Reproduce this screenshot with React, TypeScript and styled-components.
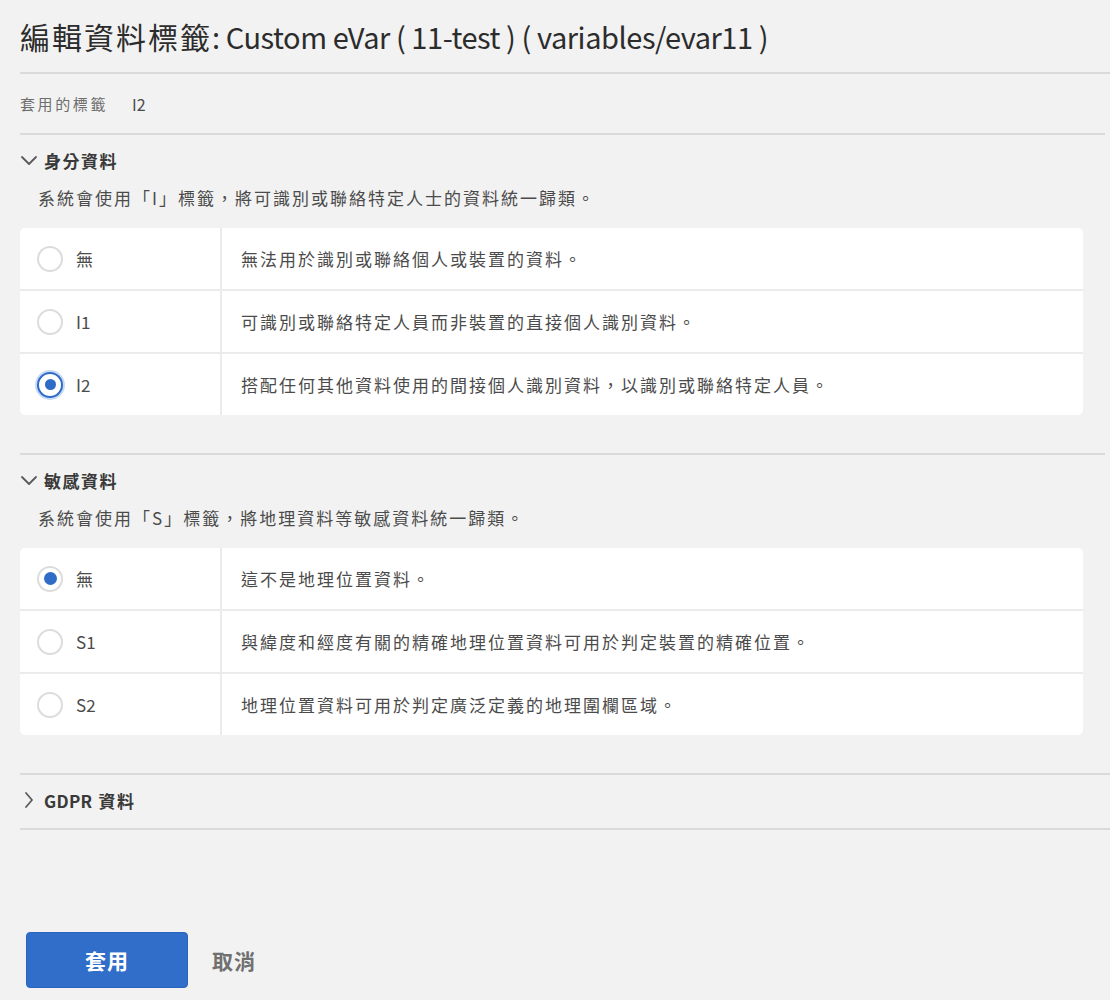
import React from "react";
import styled, { createGlobalStyle } from "styled-components";

const Global = createGlobalStyle`
  html, body { margin: 0; padding: 0; background: #f2f2f2; }
  body { font-family: "Noto Sans CJK TC", "Noto Sans", sans-serif; color: #4b4b4b; }
`;

const Page = styled.div`
  width: 1110px;
  min-height: 1000px;
  padding-left: 20px;
  box-sizing: border-box;
`;

const Title = styled.h1`
  margin: 0;
  height: 72px;
  display: flex;
  align-items: center;
  font-size: 30px;
  font-weight: 400;
  color: #2c2c2c;
  letter-spacing: 2px;
  white-space: pre;
`;

const TitleLatin = styled.span`
  font-size: 29px;
  letter-spacing: -0.45px;
`;

const AppliedRow = styled.div`
  border-top: 2px solid #dadada;
  height: 59px;
  display: flex;
  align-items: center;
  gap: 24px;
  font-size: 15px;
  letter-spacing: 2.6px;
  color: #6e6e6e;
`;

const AppliedValue = styled.span`
  color: #4b4b4b;
  font-size: 16px;
  letter-spacing: 0;
`;

const Section = styled.section<{ $open: boolean }>`
  border-top: 2px solid #dadada;
  padding: 12px 0 ${(p) => (p.$open ? "38px" : "15px")};
  margin-right: ${(p) => (p.$open ? "5px" : "0")};
`;

const LastLine = styled.div`
  border-top: 2px solid #dadada;
`;

const Heading = styled.div`
  height: 26px;
  display: flex;
  align-items: center;
  gap: 6px;
  font-size: 17px;
  font-weight: 700;
  letter-spacing: 1.5px;
  color: #3a3a3a;
`;

const HeadingLatin = styled.span`
  letter-spacing: 0.3px;
`;

const ChevronBox = styled.span`
  width: 18px;
  height: 18px;
  display: inline-flex;
  align-items: center;
  justify-content: center;
  color: #5a5a5a;
`;

const Desc = styled.div`
  margin: 13px 0 0 18px;
  line-height: 24px;
  font-size: 17px;
  letter-spacing: 2px;
  color: #4b4b4b;
`;

const Card = styled.div`
  margin-top: 18px;
  width: 1063px;
  background: #fff;
  border-radius: 5px;
  overflow: hidden;
`;

const Row = styled.div`
  display: grid;
  grid-template-columns: 202px 1fr;
  height: 61px;
  & + & { border-top: 2px solid #ebebeb; }
`;

const OptCell = styled.label`
  display: flex;
  align-items: center;
  gap: 13px;
  padding-left: 17px;
  border-right: 2px solid #ebebeb;
  font-size: 17px;
  color: #4b4b4b;
`;

const DescCell = styled.div`
  display: flex;
  align-items: center;
  padding-left: 19px;
  font-size: 17px;
  letter-spacing: 2px;
  color: #4b4b4b;
`;

const Radio = styled.span<{ $checked: boolean; $focus: boolean }>`
  width: 26px;
  height: 26px;
  box-sizing: border-box;
  border-radius: 50%;
  border: 2px solid ${(p) => (p.$focus ? "#2f6cc8" : "#dcdcdc")};
  box-shadow: ${(p) => (p.$focus ? "0 0 0 2px #c8daf4" : "none")};
  display: flex;
  align-items: center;
  justify-content: center;
  background: #fff;
  &::after {
    content: "";
    display: ${(p) => (p.$checked ? "block" : "none")};
    width: ${(p) => (p.$focus ? "11px" : "13px")};
    height: ${(p) => (p.$focus ? "11px" : "13px")};
    border-radius: 50%;
    background: #2f6cc8;
  }
`;

const Footer = styled.div`
  margin-top: 102px;
  margin-left: 6px;
  display: flex;
  align-items: center;
  gap: 24px;
`;

const PrimaryButton = styled.button`
  width: 162px;
  height: 56px;
  border: 1px solid #2a63b9;
  border-radius: 4px;
  background: #316ec9;
  color: #fff;
  font-family: inherit;
  font-size: 21px;
  font-weight: 700;
  letter-spacing: 1px;
  cursor: pointer;
`;

const TextButton = styled.button`
  border: none;
  background: none;
  padding: 0;
  color: #707070;
  font-family: inherit;
  font-size: 21px;
  font-weight: 700;
  letter-spacing: 1px;
  cursor: pointer;
`;

const Chevron = ({ open }: { open: boolean }) => (
  <ChevronBox>
    <svg width="18" height="18" viewBox="0 0 18 18" fill="none" stroke="currentColor" strokeWidth="1.8" strokeLinecap="round" strokeLinejoin="round">
      {open ? <polyline points="2,6 9,13 16,6" /> : <polyline points="6,2 12,9 6,16" />}
    </svg>
  </ChevronBox>
);

type Opt = { label: string; desc: string; checked?: boolean; focus?: boolean };

const identity: Opt[] = [
  { label: "無", desc: "無法用於識別或聯絡個人或裝置的資料。" },
  { label: "I1", desc: "可識別或聯絡特定人員而非裝置的直接個人識別資料。" },
  { label: "I2", desc: "搭配任何其他資料使用的間接個人識別資料，以識別或聯絡特定人員。", checked: true, focus: true },
];

const sensitive: Opt[] = [
  { label: "無", desc: "這不是地理位置資料。", checked: true },
  { label: "S1", desc: "與緯度和經度有關的精確地理位置資料可用於判定裝置的精確位置。" },
  { label: "S2", desc: "地理位置資料可用於判定廣泛定義的地理圍欄區域。" },
];

const OptionTable = ({ opts }: { opts: Opt[] }) => (
  <Card>
    {opts.map((o) => (
      <Row key={o.label}>
        <OptCell>
          <Radio $checked={!!o.checked} $focus={!!o.focus} />
          {o.label}
        </OptCell>
        <DescCell>{o.desc}</DescCell>
      </Row>
    ))}
  </Card>
);

export default function App() {
  return (
    <>
      <Global />
      <Page>
        <Title>
          編輯資料標籤<TitleLatin>: Custom eVar ( 11-test ) ( variables/evar11 )</TitleLatin>
        </Title>
        <AppliedRow>
          套用的標籤
          <AppliedValue>I2</AppliedValue>
        </AppliedRow>
        <Section $open>
          <Heading>
            <Chevron open />
            身分資料
          </Heading>
          <Desc>系統會使用「I」標籤，將可識別或聯絡特定人士的資料統一歸類。</Desc>
          <OptionTable opts={identity} />
        </Section>
        <Section $open>
          <Heading>
            <Chevron open />
            敏感資料
          </Heading>
          <Desc>系統會使用「S」標籤，將地理資料等敏感資料統一歸類。</Desc>
          <OptionTable opts={sensitive} />
        </Section>
        <Section $open={false}>
          <Heading>
            <Chevron open={false} />
            <HeadingLatin>GDPR</HeadingLatin> 資料
          </Heading>
        </Section>
        <LastLine />
        <Footer>
          <PrimaryButton>套用</PrimaryButton>
          <TextButton>取消</TextButton>
        </Footer>
      </Page>
    </>
  );
}
